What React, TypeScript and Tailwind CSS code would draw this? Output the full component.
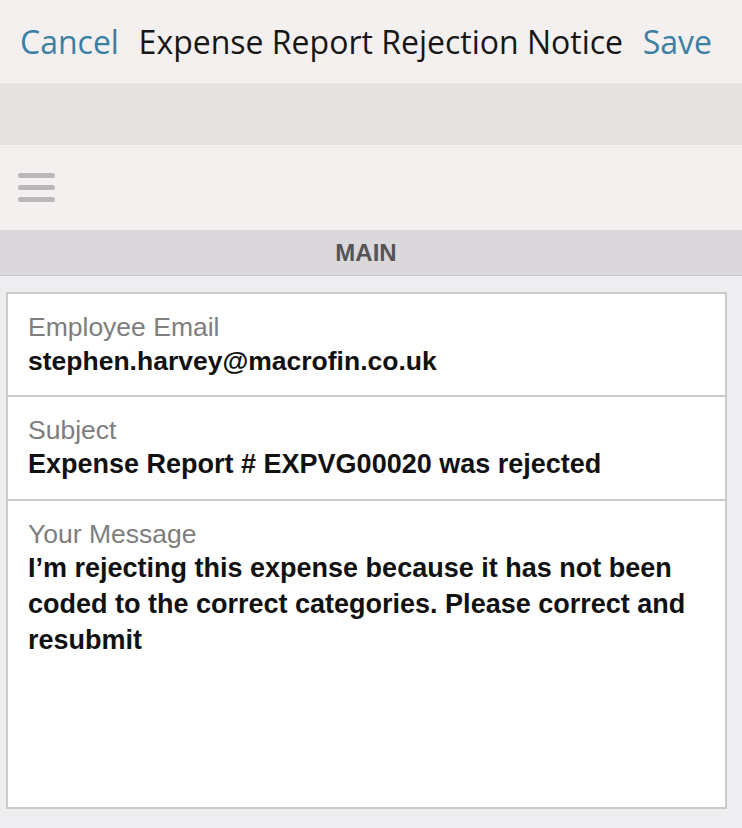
import React from "react";

export default function App() {
  return (
    <div className="w-[742px] h-[828px] overflow-hidden bg-[#eeedef] flex flex-col" style={{ fontFamily: '"Liberation Sans", Arial, sans-serif' }}>
      <div className="h-[83px] bg-[#f3f0ef] flex items-center justify-between pl-[20px] pr-[30px] font-['Open_Sans',sans-serif] text-[32px]">
        <span className="text-[#3b7fa3]">Cancel</span>
        <span className="text-[#161616] font-medium">Expense Report Rejection Notice</span>
        <span className="text-[#3b7fa3]">Save</span>
      </div>
      <div className="h-[62px] bg-[#e5e2e0]" />
      <div className="h-[85px] bg-[#f3f0ef] flex items-center px-[18px]">
        <div className="flex flex-col gap-[7px] w-[37px]">
          <div className="h-[5px] rounded-full bg-[#b9b7b8]" />
          <div className="h-[5px] rounded-full bg-[#b9b7b8]" />
          <div className="h-[5px] rounded-full bg-[#b9b7b8]" />
        </div>
      </div>
      <div className="h-[46px] bg-[#dad8db] border-b border-[#c9c7ca] flex items-center justify-center pr-[10px]">
        <span className="text-[#555456] text-[24px] font-bold">MAIN</span>
      </div>
      <div className="pt-[16px] pl-[6px] pr-[15px]">
        <div className="bg-white border-2 border-[#cbcbcb] h-[517px] flex flex-col">
          <div className="h-[103px] border-b-2 border-[#cbcbcb] px-[20px] pt-[17px]">
            <div className="text-[26.5px] leading-[32px] text-[#7e7e7e]">Employee Email</div>
            <div className="text-[26.5px] leading-[36px] font-bold text-[#111]">stephen.harvey@macrofin.co.uk</div>
          </div>
          <div className="h-[104px] border-b-2 border-[#cbcbcb] px-[20px] pt-[17px]">
            <div className="text-[26.5px] leading-[32px] text-[#7e7e7e]">Subject</div>
            <div className="text-[27px] leading-[36px] font-bold text-[#111]">Expense Report # EXPVG00020 was rejected</div>
          </div>
          <div className="flex-1 pl-[20px] pr-[10px] pt-[17px]">
            <div className="text-[26.5px] leading-[32px] text-[#7e7e7e]">Your Message</div>
            <div className="text-[27px] leading-[36px] font-bold text-[#111]">
              I’m rejecting this expense because it has not been coded to the correct categories. Please correct and resubmit
            </div>
          </div>
        </div>
      </div>
    </div>
  );
}
